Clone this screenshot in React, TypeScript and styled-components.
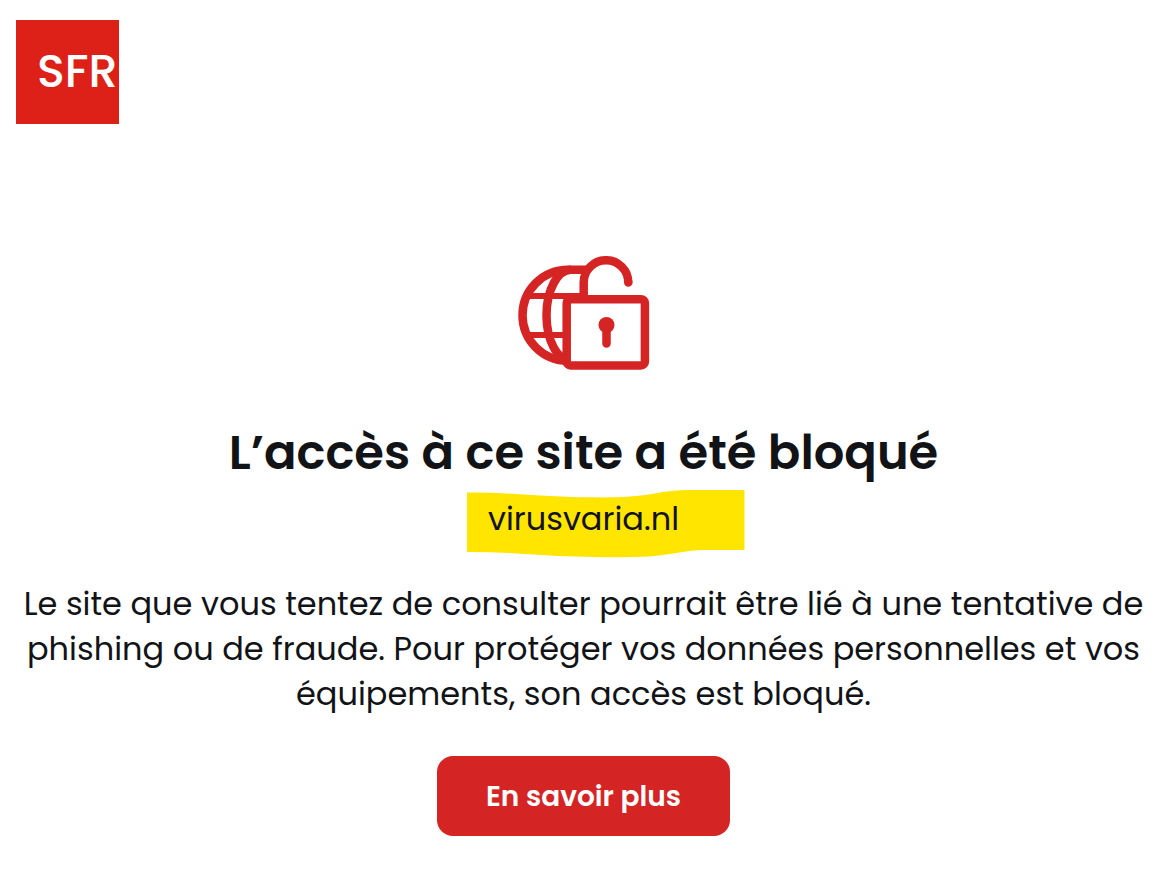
import React from "react";
import styled, { createGlobalStyle } from "styled-components";

const GlobalStyle = createGlobalStyle`
  *, *::before, *::after { box-sizing: border-box; }
  body {
    margin: 0;
    background: #ffffff;
    color: #121317;
    font-family: Poppins, Inter, "Liberation Sans", sans-serif;
  }
`;

const Page = styled.div`
  display: flex;
  flex-direction: column;
  gap: 132px;
  padding: 20px 16px 48px;
`;

const Header = styled.header`
  display: flex;
`;

const Logo = styled.svg`
  display: block;
  width: 103px;
  height: 104px;
`;

const LogoText = styled.text`
  fill: #ffffff;
  font-family: Poppins, "Open Sans", sans-serif;
  font-size: 46px;
  font-weight: 500;
`;

const Main = styled.main`
  display: flex;
  flex-direction: column;
  align-items: center;
  text-align: center;
  padding-right: 3px;
`;

const LockIcon = styled.svg`
  display: block;
  width: 132px;
  height: 114px;
  margin-bottom: 47px;
`;

const Title = styled.h1`
  margin: 0;
  font-size: 48px;
  font-weight: 600;
  line-height: 72px;
`;

const Domain = styled.p`
  position: relative;
  z-index: 0;
  margin: 7px 0 40px;
  font-size: 32px;
  line-height: 45px;
`;

const Highlight = styled.svg`
  position: absolute;
  z-index: -1;
  top: -6px;
  left: calc(50% - 117px);
  width: 278px;
  height: 68px;
`;

const Message = styled.p`
  margin: 0 0 40px;
  max-width: 1140px;
  font-size: 32px;
  line-height: 45px;
`;

const MoreButton = styled.button`
  padding: 17px 49px 15px;
  border: 0;
  border-radius: 16px;
  background: #d52424;
  color: #ffffff;
  font: inherit;
  font-size: 28px;
  font-weight: 600;
  line-height: 48px;
  cursor: pointer;
`;

export default function App() {
  return (
    <>
      <GlobalStyle />
      <Page>
        <Header>
          <Logo viewBox="0 0 103 104" role="img" aria-label="SFR">
            <rect width="103" height="104" fill="#de2118" />
            <LogoText x="21" y="67">SFR</LogoText>
          </Logo>
        </Header>
        <Main>
          <LockIcon
            viewBox="518 256 132 114"
            fill="none"
            stroke="#d52424"
            strokeWidth="8.5"
            aria-hidden="true"
          >
            <path d="M586 269.8H568a45.5 45.5 0 0 0 0 91" />
            <path d="M571 269.8c-13.500 0-24.500 20.400-24.500 45.500s11 45.500 24.500 45.500" />
            <path d="M527 296h56M527 335h38" strokeWidth="6" />
            <rect x="566.700" y="299.200" width="78.200" height="66.200" rx="4" fill="#ffffff" />
            <path d="M583.700 299v-16.500a22.300 22.300 0 0 1 44.600 0" />
            <path d="M628.300 282v.5M606.500 326v17.500" strokeLinecap="round" />
            <circle cx="606.500" cy="325" r="8" fill="#d52424" stroke="none" />
          </LockIcon>
          <Title>L’accès à ce site a été bloqué</Title>
          <Domain>
            <Highlight viewBox="0 0 278 68" aria-hidden="true">
              <path
                fill="#ffe500"
                d="M0 2.500C35 2 70 6 105 7C150 8 165 7 185 4C202 1 208 0 225 0H277.500V60H238C218 60 205 65 182 66.500C150 68 105 67 75 65C50 63 25 62 0 62Z"
              />
            </Highlight>
            virusvaria.nl
          </Domain>
          <Message>
            Le site que vous tentez de consulter pourrait être lié à une tentative de
            phishing ou de fraude. Pour protéger vos données personnelles et vos
            équipements, son accès est bloqué.
          </Message>
          <MoreButton type="button">En savoir plus</MoreButton>
        </Main>
      </Page>
    </>
  );
}
